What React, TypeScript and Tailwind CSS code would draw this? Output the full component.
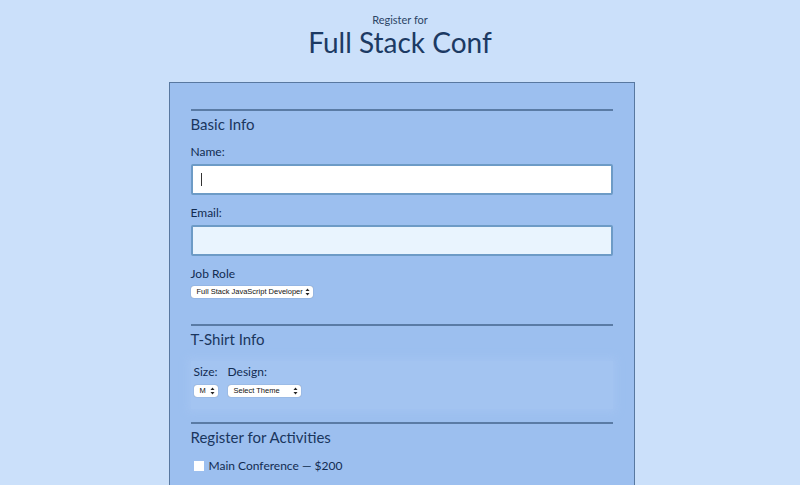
import React from "react";

const font = { fontFamily: "Lato, 'Noto Sans', sans-serif" };

function Arrows() {
  return (
    <svg width="5" height="8" viewBox="0 0 5 8" className="shrink-0">
      <path d="M2.5 0.5 L4.5 3 H0.5 Z" fill="#222" />
      <path d="M2.5 7.5 L4.5 5 H0.5 Z" fill="#222" />
    </svg>
  );
}

function MiniSelect({ label, width }: { label: string; width: string }) {
  return (
    <div
      className={`flex h-[12px] items-center justify-between rounded-[3px] bg-white pl-[6px] pr-[3px] shadow-[0_0_1px_rgba(0,0,0,0.45)] ${width}`}
    >
      <span
        className="whitespace-nowrap text-[7.5px] leading-none text-[#111]"
        style={{ fontFamily: "'Liberation Sans', Arial, sans-serif" }}
      >
        {label}
      </span>
      <Arrows />
    </div>
  );
}

function Rule() {
  return <div className="h-[2px] bg-[#5a7ba5]" />;
}

export default function App() {
  return (
    <div className="min-h-[485px] bg-[#cbe0fa] text-[#1a365e]" style={font}>
      <header className="pt-[14px] text-center">
        <p className="text-[11px] leading-[12px] text-[#2b4566]">Register for</p>
        <h1 className="text-[28px] leading-[32px] text-[#1c3a63]">Full Stack Conf</h1>
      </header>

      <div className="mt-[24px] flex justify-center pl-[3px]">
        <form className="w-[466px] border border-[#5878a0] bg-[#9cbfef] px-[21px] pt-[26px] pb-6">
          {/* Basic info */}
          <Rule />
          <h2 className="mt-[3px] text-[15px] leading-[20px]">Basic Info</h2>
          <label className="mt-[10px] block text-[12px] leading-[16px] text-[#122c52]">Name:</label>
          <div className="relative mt-[4px] h-[31px] rounded-[2px] border-2 border-[#6d9bc6] bg-white">
            <span className="absolute left-[8px] top-[7px] h-[13px] w-px bg-[#333]" />
          </div>
          <label className="mt-[10px] block text-[12px] leading-[16px] text-[#122c52]">Email:</label>
          <div className="mt-[4px] h-[31px] rounded-[2px] border-2 border-[#6d9bc6] bg-[#e9f4fe]" />
          <label className="mt-[10px] block text-[12px] leading-[16px] text-[#122c52]">Job Role</label>
          <div className="mt-[4px]">
            <MiniSelect label="Full Stack JavaScript Developer" width="w-[122px]" />
          </div>

          {/* T-shirt */}
          <div className="mt-[26px]">
            <Rule />
          </div>
          <h2 className="mt-[3px] text-[15px] leading-[20px]">T-Shirt Info</h2>
          <div className="mt-[12px] flex gap-[10px] bg-[#a3c4f1] px-[3px] pt-[3px] pb-[12px] shadow-[0_0_8px_3px_#a3c4f1]">
            <div className="flex flex-col">
              <span className="text-[12px] leading-[16px] text-[#122c52]">Size:</span>
              <div className="mt-[5px]">
                <MiniSelect label="M" width="w-[24px]" />
              </div>
            </div>
            <div className="flex flex-col">
              <span className="text-[12px] leading-[16px] text-[#122c52]">Design:</span>
              <div className="mt-[5px]">
                <MiniSelect label="Select Theme" width="w-[73px]" />
              </div>
            </div>
          </div>

          {/* Activities */}
          <div className="mt-[13px]">
            <Rule />
          </div>
          <h2 className="mt-[3px] text-[15px] leading-[20px]">Register for Activities</h2>
          <label className="mt-[11px] flex items-center gap-[5px] pl-[3px] text-[12px] leading-[16px] text-[#122c52]">
            <span className="h-[10px] w-[10px] bg-white" />
            Main Conference — $200
          </label>
        </form>
      </div>
    </div>
  );
}
